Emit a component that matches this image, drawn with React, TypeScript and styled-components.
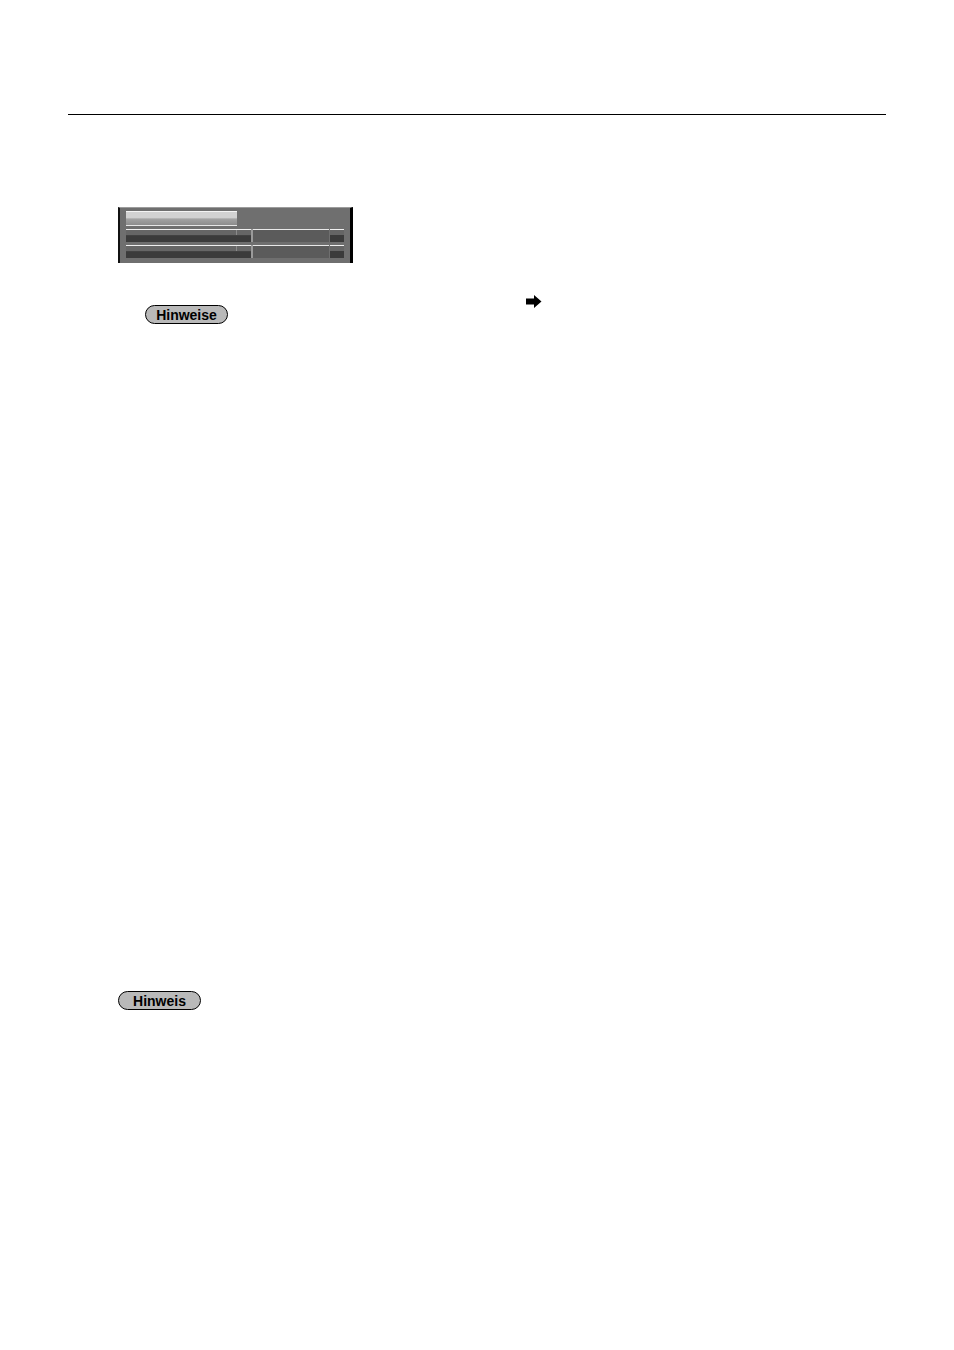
import styled, { createGlobalStyle } from 'styled-components';

const GlobalStyle = createGlobalStyle`
  html, body {
    margin: 0;
    padding: 0;
    background: #ffffff;
    font-family: 'Liberation Sans', Arial, sans-serif;
  }
`;

function App() {
  const rows = ['a', 'b'];

  return (
    <Page>
      <GlobalStyle />
      <HeaderRule />

      <MenuPanel>
        <HighlightBar />
        {rows.map((key) => (
          <MenuRow key={key}>
            <LabelCell>
              <Cursor />
            </LabelCell>
            <Divider />
            <ValueCell />
            <TailCell />
          </MenuRow>
        ))}
      </MenuPanel>

      <NoteRow>
        <Pill $indent={77}>Hinweise</Pill>
        <ArrowIcon width="16" height="13" viewBox="0 0 16 13">
          <path d="M0 3.5h8V0l7.5 6.5L8 13V9.5H0z" fill="#000" />
        </ArrowIcon>
      </NoteRow>

      <BottomNote>
        <Pill $indent={50}>Hinweis</Pill>
      </BottomNote>
    </Page>
  );
}

export default App;

const Page = styled.div`
  width: 954px;
  height: 1350px;
  padding: 114px 68px 0;
  box-sizing: border-box;
`;

const HeaderRule = styled.div`
  width: 818px;
  height: 1px;
  background: #000;
`;

const MenuPanel = styled.div`
  margin: 92px 0 0 50px;
  width: 235px;
  height: 56px;
  box-sizing: border-box;
  background: #6f6f6f;
  border-top: 1px solid #9c9c9c;
  border-left: 2px solid #111;
  border-right: 3px solid #000;
  padding: 3px 6px 0 6px;
  display: flex;
  flex-direction: column;
  gap: 3px;
`;

const HighlightBar = styled.div`
  width: 111px;
  height: 15px;
  border-top: 1px solid #f4f4f4;
  border-bottom: 1px solid #e6e6e6;
  background: linear-gradient(#d2d2d2 0%, #d2d2d2 42%, #a2a2a2 55%, #8c8c8c 100%);
  box-sizing: border-box;
`;

const MenuRow = styled.div`
  display: flex;
  height: 13px;
`;

const LabelCell = styled.div`
  position: relative;
  width: 125px;
  border-top: 1px solid #f0f0f0;
  background: linear-gradient(#666666 0%, #666666 45%, #3b3b3b 46%, #3b3b3b 100%);
`;

const Cursor = styled.div`
  position: absolute;
  left: 110px;
  top: 0;
  width: 1px;
  height: 5px;
  background: #8a8a8a;
`;

const Divider = styled.div`
  width: 2px;
  background: #9a9a9a;
`;

const ValueCell = styled.div`
  width: 76px;
  border-top: 1px solid #e8e8e8;
  background: #5b5b5b;
`;

const TailCell = styled.div`
  width: 14px;
  margin-left: 1px;
  border-top: 1px solid #f0f0f0;
  background: linear-gradient(#656565 0%, #656565 40%, #3b3b3b 41%, #3b3b3b 100%);
`;

const NoteRow = styled.div`
  display: flex;
  align-items: flex-start;
  margin-top: 42px;
`;

const Pill = styled.div<{ $indent: number }>`
  margin-left: ${({ $indent }) => $indent}px;
  width: 83px;
  height: 19px;
  box-sizing: border-box;
  border: 1.5px solid #000;
  border-radius: 10px;
  background: #b9b9b9;
  display: flex;
  align-items: center;
  justify-content: center;
  font-size: 14px;
  font-weight: 700;
  color: #000;
  line-height: 1;
`;

const ArrowIcon = styled.svg`
  margin: -10px 0 0 298px;
  width: 16px;
  height: 13px;
`;

const BottomNote = styled.div`
  margin-top: 667px;
`;
